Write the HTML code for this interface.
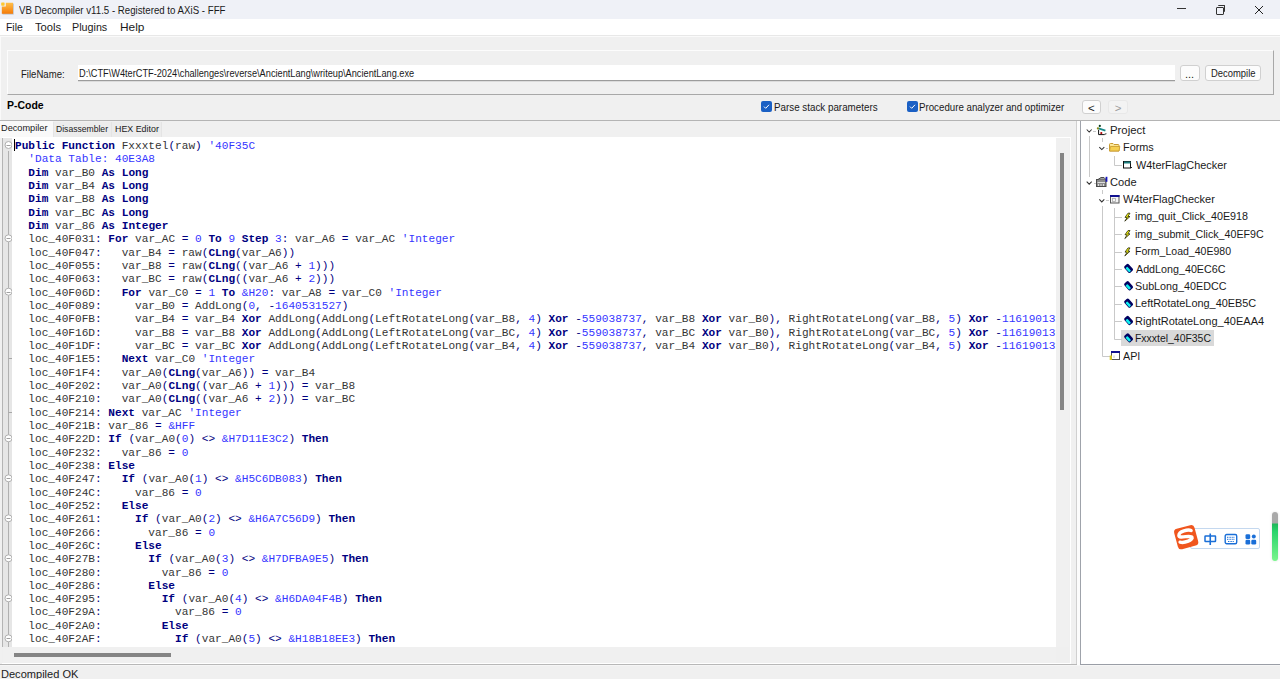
<!DOCTYPE html>
<html><head><meta charset="utf-8"><style>
html,body{margin:0;padding:0}
body{width:1280px;height:679px;overflow:hidden;background:#f0f0f0;position:relative;font-family:"Liberation Sans",sans-serif;color:#1a1a1a}
.a{position:absolute}
.t{position:absolute;white-space:nowrap;line-height:1}
i,b{font-style:normal}
#title{left:0;top:0;width:1280px;height:19px;background:#eff1f7}
#menu{left:0;top:19px;width:1280px;height:16px;background:#fff}
#grp{left:7px;top:50px;border-top:1px solid #fcfcfc;border-left:1px solid #fcfcfc;border-right:1px solid #a8a8a8;border-bottom:1px solid #a8a8a8;box-sizing:border-box;width:1267px;height:45px}
#fname{left:78px;top:65px;width:1097px;height:16px;background:#fff;border-bottom:1px solid #9c9c9c;box-sizing:border-box}
.btn{position:absolute;background:#fcfcfc;border:1px solid #d0d0d0;border-radius:3px;box-sizing:border-box}
.cb{position:absolute;width:11px;height:11px;background:#1b60c4;border-radius:2px}
#sep1{left:0;top:120px;width:1280px;height:1px;background:#b4b4b4}
#code{left:2px;top:137px;width:1069px;height:527px;background:#efefef;border-right:1px solid #fff;border-bottom:1px solid #fff;border-top:1px solid #fff;box-sizing:border-box}
#txt{left:12px;top:138px;width:1044px;height:509px;background:#fff;overflow:hidden}
pre{margin:0;font-family:"Liberation Mono",monospace;font-size:11.11px;line-height:13.333px;color:#353535}
#pre{position:absolute;left:3px;top:2px}
.k{color:#000080;font-weight:bold}
.n{color:#3535ff}
.o{color:#000080}
#tree{left:1081px;top:121px;width:199px;height:543px;background:#fff}
.tl{position:absolute;background:#c6c6c6}
</style></head><body>
<div id="title" class="a"></div>
<svg class="a" style="left:0px;top:0px" width="16" height="17" viewBox="0 0 16 17"><defs><linearGradient id="og" x1="0" y1="0" x2="0" y2="1"><stop offset="0" stop-color="#ffc04a"/><stop offset="1" stop-color="#f57a08"/></linearGradient></defs><path d="M1.8 13.8H13V2.7H5.8V6.6H1.8Z" fill="#b8bcc4" transform="translate(0.7 0.7)"/><path d="M1.8 13.8H13V2.7H5.8V6.6H1.8Z" fill="url(#og)"/><rect x="1.2" y="2.4" width="3.4" height="3.3" rx="0.6" fill="#ffc830"/></svg>
<div class="t" id="ttl" style="left:19.00px;top:4.50px;font-size:11.00px;transform:scaleX(0.8803);transform-origin:0 0;">VB Decompiler v11.5 - Registered to AXiS - FFF</div>
<div class="a" style="left:1177px;top:8px;width:9px;height:1px;background:#333"></div>
<div class="a" style="left:1216px;top:7px;width:6px;height:6px;border:1px solid #333;border-radius:1px"></div>
<div class="a" style="left:1218px;top:5px;width:6px;height:6px;border-top:1px solid #333;border-right:1px solid #333;border-radius:1px"></div>
<svg class="a" style="left:1254px;top:5px" width="10" height="10" viewBox="0 0 10 10"><path d="M1 1L9 9M9 1L1 9" stroke="#222" stroke-width="1"/></svg>
<div id="menu" class="a"></div>
<div class="a" style="left:0;top:35px;width:1280px;height:1px;background:#e8e8e8"></div><div class="a" style="left:0;top:36px;width:1280px;height:1px;background:#fafafa"></div><div class="a" style="left:0;top:36px;width:1px;height:84px;background:#fafafa"></div>
<div class="t" id="m_file" style="left:5.56px;top:22.30px;font-size:10.80px;transform:scaleX(0.9663);transform-origin:0 0;">File</div>
<div class="t" id="m_tools" style="left:35.09px;top:22.30px;font-size:10.80px;transform:scaleX(1.0367);transform-origin:0 0;">Tools</div>
<div class="t" id="m_plugins" style="left:72.37px;top:22.30px;font-size:10.80px;transform:scaleX(0.9949);transform-origin:0 0;">Plugins</div>
<div class="t" id="m_help" style="left:119.56px;top:22.30px;font-size:10.80px;transform:scaleX(1.1011);transform-origin:0 0;">Help</div>
<div id="grp" class="a"></div>
<div class="t" id="fnl" style="left:20.55px;top:69.80px;font-size:10.00px;transform:scaleX(0.9575);transform-origin:0 0;">FileName:</div>
<div id="fname" class="a"></div>
<div class="a" style="left:78px;top:81px;width:1097px;height:1px;background:#dcdcdc"></div>
<div class="t" id="path" style="left:79.19px;top:67.90px;font-size:11.00px;transform:scaleX(0.8370);transform-origin:0 0;">D:\CTF\W4terCTF-2024\challenges\reverse\AncientLang\writeup\AncientLang.exe</div>
<div class="btn" style="left:1180px;top:65px;width:20px;height:16px"></div>
<div class="t" id="dots" style="left:1185.00px;top:69.00px;font-size:11.00px;">...</div>
<div class="btn" style="left:1205px;top:65px;width:56px;height:16px"></div>
<div class="t" id="dcb" style="left:1210.64px;top:68.90px;font-size:10.00px;transform:scaleX(0.9418);transform-origin:0 0;">Decompile</div>
<div class="t" id="pcode" style="left:6.92px;top:99.90px;font-size:10.80px;transform:scaleX(0.9681);transform-origin:0 0;font-weight:bold;color:#000">P-Code</div>
<div class="cb" style="left:761px;top:101px"></div>
<svg class="a" style="left:761px;top:101px" width="11" height="11" viewBox="0 0 11 11"><path d="M3 5.6L4.7 7.3L8 3.8" stroke="#fff" stroke-width="1" fill="none"/></svg>
<div class="cb" style="left:907px;top:101px"></div>
<svg class="a" style="left:907px;top:101px" width="11" height="11" viewBox="0 0 11 11"><path d="M3 5.6L4.7 7.3L8 3.8" stroke="#fff" stroke-width="1" fill="none"/></svg>
<div class="t" id="cb1" style="left:773.98px;top:102.00px;font-size:10.50px;transform:scaleX(0.9341);transform-origin:0 0;">Parse stack parameters</div>
<div class="t" id="cb2" style="left:919.47px;top:102.00px;font-size:10.50px;transform:scaleX(0.9252);transform-origin:0 0;">Procedure analyzer and optimizer</div>
<div class="btn" style="left:1082px;top:100px;width:19px;height:14px"></div>
<div class="t" id="lt" style="left:1088.00px;top:102.50px;font-size:11.50px;">&lt;</div>
<div class="btn" style="left:1108px;top:100px;width:20px;height:14px;background:#f3f3f3;border-color:#e8e8e8"></div>
<div class="t" id="gt" style="left:1114.80px;top:102.50px;font-size:11.50px;color:#9a9a9a">&gt;</div>
<div id="sep1" class="a"></div>
<div class="a" style="left:0;top:121px;width:53px;height:17px;background:#f9f9f9"></div>
<div class="a" style="left:53px;top:122px;width:58px;height:15px;background:#ececec;border-left:1px solid #e4e4e4"></div>
<div class="a" style="left:111px;top:122px;width:49px;height:15px;background:#ececec;border-left:1px solid #e4e4e4;border-right:1px solid #e4e4e4"></div>
<div class="t" id="tab1" style="left:1.38px;top:122.90px;font-size:9.80px;transform:scaleX(0.9375);transform-origin:0 0;">Decompiler</div>
<div class="t" id="tab2" style="left:55.64px;top:124.20px;font-size:9.80px;transform:scaleX(0.8762);transform-origin:0 0;">Disassembler</div>
<div class="t" id="tab3" style="left:114.92px;top:124.20px;font-size:9.80px;transform:scaleX(0.9047);transform-origin:0 0;">HEX Editor</div>
<div id="code" class="a"></div>
<div class="a" style="left:2px;top:138px;width:1px;height:509px;background:#b4b4b4"></div>
<div class="a" style="left:3px;top:138px;width:9px;height:509px;background:#e6e6e6"></div>
<div id="txt" class="a"><pre id="pre"><b class="k">Public</b> <b class="k">Function</b> Fxxxtel<i class="o">(</i>raw<i class="o">)</i> <i class="n">&#x27;40F35C</i>
  <i class="n">&#x27;Data Table: 40E3A8</i>
  <b class="k">Dim</b> var_B0 <b class="k">As</b> <b class="k">Long</b>
  <b class="k">Dim</b> var_B4 <b class="k">As</b> <b class="k">Long</b>
  <b class="k">Dim</b> var_B8 <b class="k">As</b> <b class="k">Long</b>
  <b class="k">Dim</b> var_BC <b class="k">As</b> <b class="k">Long</b>
  <b class="k">Dim</b> var_86 <b class="k">As</b> <b class="k">Integer</b>
  loc_40F031<i class="o">:</i> <b class="k">For</b> var_AC <i class="o">=</i> <i class="n">0</i> <b class="k">To</b> <i class="n">9</i> <b class="k">Step</b> <i class="n">3</i><i class="o">:</i> var_A6 <i class="o">=</i> var_AC <i class="n">&#x27;Integer</i>
  loc_40F047<i class="o">:</i>   var_B4 <i class="o">=</i> raw<i class="o">(</i><b class="k">CLng</b><i class="o">(</i>var_A6<i class="o">)</i><i class="o">)</i>
  loc_40F055<i class="o">:</i>   var_B8 <i class="o">=</i> raw<i class="o">(</i><b class="k">CLng</b><i class="o">(</i><i class="o">(</i>var_A6 <i class="o">+</i> <i class="n">1</i><i class="o">)</i><i class="o">)</i><i class="o">)</i>
  loc_40F063<i class="o">:</i>   var_BC <i class="o">=</i> raw<i class="o">(</i><b class="k">CLng</b><i class="o">(</i><i class="o">(</i>var_A6 <i class="o">+</i> <i class="n">2</i><i class="o">)</i><i class="o">)</i><i class="o">)</i>
  loc_40F06D<i class="o">:</i>   <b class="k">For</b> var_C0 <i class="o">=</i> <i class="n">1</i> <b class="k">To</b> <i class="n">&amp;H20</i><i class="o">:</i> var_A8 <i class="o">=</i> var_C0 <i class="n">&#x27;Integer</i>
  loc_40F089<i class="o">:</i>     var_B0 <i class="o">=</i> AddLong<i class="o">(</i><i class="n">0</i><i class="o">,</i> <i class="o">-</i><i class="n">1640531527</i><i class="o">)</i>
  loc_40F0FB<i class="o">:</i>     var_B4 <i class="o">=</i> var_B4 <b class="k">Xor</b> AddLong<i class="o">(</i>AddLong<i class="o">(</i>LeftRotateLong<i class="o">(</i>var_B8<i class="o">,</i> <i class="n">4</i><i class="o">)</i> <b class="k">Xor</b> <i class="o">-</i><i class="n">559038737</i><i class="o">,</i> var_B8 <b class="k">Xor</b> var_B0<i class="o">)</i><i class="o">,</i> RightRotateLong<i class="o">(</i>var_B8<i class="o">,</i> <i class="n">5</i><i class="o">)</i> <b class="k">Xor</b> <i class="o">-</i><i class="n">1161901316</i><i class="o">)</i>
  loc_40F16D<i class="o">:</i>     var_B8 <i class="o">=</i> var_B8 <b class="k">Xor</b> AddLong<i class="o">(</i>AddLong<i class="o">(</i>LeftRotateLong<i class="o">(</i>var_BC<i class="o">,</i> <i class="n">4</i><i class="o">)</i> <b class="k">Xor</b> <i class="o">-</i><i class="n">559038737</i><i class="o">,</i> var_BC <b class="k">Xor</b> var_B0<i class="o">)</i><i class="o">,</i> RightRotateLong<i class="o">(</i>var_BC<i class="o">,</i> <i class="n">5</i><i class="o">)</i> <b class="k">Xor</b> <i class="o">-</i><i class="n">1161901316</i><i class="o">)</i>
  loc_40F1DF<i class="o">:</i>     var_BC <i class="o">=</i> var_BC <b class="k">Xor</b> AddLong<i class="o">(</i>AddLong<i class="o">(</i>LeftRotateLong<i class="o">(</i>var_B4<i class="o">,</i> <i class="n">4</i><i class="o">)</i> <b class="k">Xor</b> <i class="o">-</i><i class="n">559038737</i><i class="o">,</i> var_B4 <b class="k">Xor</b> var_B0<i class="o">)</i><i class="o">,</i> RightRotateLong<i class="o">(</i>var_B4<i class="o">,</i> <i class="n">5</i><i class="o">)</i> <b class="k">Xor</b> <i class="o">-</i><i class="n">1161901316</i><i class="o">)</i>
  loc_40F1E5<i class="o">:</i>   <b class="k">Next</b> var_C0 <i class="n">&#x27;Integer</i>
  loc_40F1F4<i class="o">:</i>   var_A0<i class="o">(</i><b class="k">CLng</b><i class="o">(</i>var_A6<i class="o">)</i><i class="o">)</i> <i class="o">=</i> var_B4
  loc_40F202<i class="o">:</i>   var_A0<i class="o">(</i><b class="k">CLng</b><i class="o">(</i><i class="o">(</i>var_A6 <i class="o">+</i> <i class="n">1</i><i class="o">)</i><i class="o">)</i><i class="o">)</i> <i class="o">=</i> var_B8
  loc_40F210<i class="o">:</i>   var_A0<i class="o">(</i><b class="k">CLng</b><i class="o">(</i><i class="o">(</i>var_A6 <i class="o">+</i> <i class="n">2</i><i class="o">)</i><i class="o">)</i><i class="o">)</i> <i class="o">=</i> var_BC
  loc_40F214<i class="o">:</i> <b class="k">Next</b> var_AC <i class="n">&#x27;Integer</i>
  loc_40F21B<i class="o">:</i> var_86 <i class="o">=</i> <i class="n">&amp;HFF</i>
  loc_40F22D<i class="o">:</i> <b class="k">If</b> <i class="o">(</i>var_A0<i class="o">(</i><i class="n">0</i><i class="o">)</i> <i class="o">&lt;&gt;</i> <i class="n">&amp;H7D11E3C2</i><i class="o">)</i> <b class="k">Then</b>
  loc_40F232<i class="o">:</i>   var_86 <i class="o">=</i> <i class="n">0</i>
  loc_40F238<i class="o">:</i> <b class="k">Else</b>
  loc_40F247<i class="o">:</i>   <b class="k">If</b> <i class="o">(</i>var_A0<i class="o">(</i><i class="n">1</i><i class="o">)</i> <i class="o">&lt;&gt;</i> <i class="n">&amp;H5C6DB083</i><i class="o">)</i> <b class="k">Then</b>
  loc_40F24C<i class="o">:</i>     var_86 <i class="o">=</i> <i class="n">0</i>
  loc_40F252<i class="o">:</i>   <b class="k">Else</b>
  loc_40F261<i class="o">:</i>     <b class="k">If</b> <i class="o">(</i>var_A0<i class="o">(</i><i class="n">2</i><i class="o">)</i> <i class="o">&lt;&gt;</i> <i class="n">&amp;H6A7C56D9</i><i class="o">)</i> <b class="k">Then</b>
  loc_40F266<i class="o">:</i>       var_86 <i class="o">=</i> <i class="n">0</i>
  loc_40F26C<i class="o">:</i>     <b class="k">Else</b>
  loc_40F27B<i class="o">:</i>       <b class="k">If</b> <i class="o">(</i>var_A0<i class="o">(</i><i class="n">3</i><i class="o">)</i> <i class="o">&lt;&gt;</i> <i class="n">&amp;H7DFBA9E5</i><i class="o">)</i> <b class="k">Then</b>
  loc_40F280<i class="o">:</i>         var_86 <i class="o">=</i> <i class="n">0</i>
  loc_40F286<i class="o">:</i>       <b class="k">Else</b>
  loc_40F295<i class="o">:</i>         <b class="k">If</b> <i class="o">(</i>var_A0<i class="o">(</i><i class="n">4</i><i class="o">)</i> <i class="o">&lt;&gt;</i> <i class="n">&amp;H6DA04F4B</i><i class="o">)</i> <b class="k">Then</b>
  loc_40F29A<i class="o">:</i>           var_86 <i class="o">=</i> <i class="n">0</i>
  loc_40F2A0<i class="o">:</i>         <b class="k">Else</b>
  loc_40F2AF<i class="o">:</i>           <b class="k">If</b> <i class="o">(</i>var_A0<i class="o">(</i><i class="n">5</i><i class="o">)</i> <i class="o">&lt;&gt;</i> <i class="n">&amp;H18B18EE3</i><i class="o">)</i> <b class="k">Then</b></pre></div>
<div class="a" style="left:14px;top:139px;width:1px;height:12px;background:#000"></div>
<svg class="a" style="left:3px;top:138px" width="9" height="509" viewBox="0 0 9 509">
<path d="M5.5 13.0 V509" stroke="#b0b0b0" stroke-width="1"/>
<path d="M5.5 220.5 H9" stroke="#a8a8a8" stroke-width="1"/>
<path d="M5.5 274.5 H9" stroke="#a8a8a8" stroke-width="1"/>
<circle cx="5.5" cy="7.0" r="3.5" fill="#fff" stroke="#b0b0b0" stroke-width="1"/><path d="M3.5 7.5 H7.5" stroke="#a0a0a0" stroke-width="1"/>
<circle cx="5.5" cy="100.3" r="3.5" fill="#fff" stroke="#b0b0b0" stroke-width="1"/><path d="M3.5 100.5 H7.5" stroke="#a0a0a0" stroke-width="1"/>
<circle cx="5.5" cy="153.7" r="3.5" fill="#fff" stroke="#b0b0b0" stroke-width="1"/><path d="M3.5 154.5 H7.5" stroke="#a0a0a0" stroke-width="1"/>
<circle cx="5.5" cy="300.3" r="3.5" fill="#fff" stroke="#b0b0b0" stroke-width="1"/><path d="M3.5 300.5 H7.5" stroke="#a0a0a0" stroke-width="1"/>
<circle cx="5.5" cy="340.3" r="3.5" fill="#fff" stroke="#b0b0b0" stroke-width="1"/><path d="M3.5 340.5 H7.5" stroke="#a0a0a0" stroke-width="1"/>
<circle cx="5.5" cy="380.3" r="3.5" fill="#fff" stroke="#b0b0b0" stroke-width="1"/><path d="M3.5 380.5 H7.5" stroke="#a0a0a0" stroke-width="1"/>
<circle cx="5.5" cy="420.3" r="3.5" fill="#fff" stroke="#b0b0b0" stroke-width="1"/><path d="M3.5 420.5 H7.5" stroke="#a0a0a0" stroke-width="1"/>
<circle cx="5.5" cy="460.3" r="3.5" fill="#fff" stroke="#b0b0b0" stroke-width="1"/><path d="M3.5 460.5 H7.5" stroke="#a0a0a0" stroke-width="1"/>
<circle cx="5.5" cy="500.3" r="3.5" fill="#fff" stroke="#b0b0b0" stroke-width="1"/><path d="M3.5 500.5 H7.5" stroke="#a0a0a0" stroke-width="1"/>
</svg>
<div class="a" style="left:1056px;top:138px;width:13px;height:509px;background:#f0f0f0"></div>
<div class="a" style="left:1060px;top:153px;width:4px;height:257px;background:#858585"></div>
<div class="a" style="left:3px;top:647px;width:1053px;height:16px;background:#f0f0f0"></div>
<div class="a" style="left:14px;top:653px;width:157px;height:4px;background:#858585"></div>
<div class="a" style="left:1076px;top:121px;width:1px;height:543px;background:#d0d0d0"></div>
<div class="a" style="left:1080px;top:121px;width:1px;height:543px;background:#9fa3ab"></div>
<div id="tree" class="a"></div>
<div class="a" style="left:1121px;top:330px;width:93px;height:16px;background:#d9d9d9"></div>
<svg class="a" style="left:1082px;top:121px" width="198" height="543" viewBox="1082 121 198 543">
<path d="M1089.5 136V177" stroke="#c9c9c9" stroke-width="1" fill="none"/>
<path d="M1102.5 138V142" stroke="#c9c9c9" stroke-width="1" fill="none"/>
<path d="M1114.5 156V165.5H1122" stroke="#c9c9c9" stroke-width="1" fill="none"/>
<path d="M1102.5 190V194" stroke="#c9c9c9" stroke-width="1" fill="none"/>
<path d="M1102.5 206V356.5H1110" stroke="#c9c9c9" stroke-width="1" fill="none"/>
<path d="M1114.5 208V339.5" stroke="#c9c9c9" stroke-width="1" fill="none"/>
<path d="M1114.5 217.5H1122" stroke="#c9c9c9" stroke-width="1" fill="none"/>
<path d="M1114.5 234.5H1122" stroke="#c9c9c9" stroke-width="1" fill="none"/>
<path d="M1114.5 252.5H1122" stroke="#c9c9c9" stroke-width="1" fill="none"/>
<path d="M1114.5 269.5H1122" stroke="#c9c9c9" stroke-width="1" fill="none"/>
<path d="M1114.5 286.5H1122" stroke="#c9c9c9" stroke-width="1" fill="none"/>
<path d="M1114.5 304.5H1122" stroke="#c9c9c9" stroke-width="1" fill="none"/>
<path d="M1114.5 321.5H1122" stroke="#c9c9c9" stroke-width="1" fill="none"/>
<path d="M1114.5 339.5H1122" stroke="#c9c9c9" stroke-width="1" fill="none"/>
<path d="M1093 131.5H1096" stroke="#c9c9c9" stroke-width="1" fill="none"/>
<path d="M1106 148.5H1108" stroke="#c9c9c9" stroke-width="1" fill="none"/>
<path d="M1094 183.5H1096" stroke="#c9c9c9" stroke-width="1" fill="none"/>
<path d="M1106 200.5H1109" stroke="#c9c9c9" stroke-width="1" fill="none"/>
<path d="M1086.7 129.5L1089.2 132.0L1091.7 129.5" stroke="#333" stroke-width="1.05" fill="none"/>
<path d="M1099.3 147.1L1101.8 149.6L1104.3 147.1" stroke="#333" stroke-width="1.05" fill="none"/>
<path d="M1086.7 181.7L1089.2 184.2L1091.7 181.7" stroke="#333" stroke-width="1.05" fill="none"/>
<path d="M1099.3 199.4L1101.8 201.9L1104.3 199.4" stroke="#333" stroke-width="1.05" fill="none"/>
<rect x="1098.5" y="130" width="6.5" height="4.5" fill="#fff"/>
<path d="M1098.6 129.8V134.6H1104" stroke="#111" stroke-width="1" fill="none"/>
<path d="M1104 134.8L1106.4 133.4" stroke="#555" stroke-width="1.2"/>
<path d="M1098.6 128.4L1105.4 130.6" stroke="#1a8a8a" stroke-width="1.9"/>
<circle cx="1097.9" cy="128.4" r="1.1" fill="#8a8a18"/>
<circle cx="1099.8" cy="125.9" r="1.1" fill="#063a14"/>
<circle cx="1101.3" cy="133.1" r="1.1" fill="#b00808"/>
<defs><linearGradient id="fg" x1="0" y1="0" x2="0" y2="1"><stop offset="0" stop-color="#fff2b0"/><stop offset="1" stop-color="#f0c040"/></linearGradient></defs>
<path d="M1109.5 151V144.5Q1109.5 143.5 1110.5 143.5H1113L1114 144.5H1118Q1119 144.5 1119 145.5V151Z" fill="url(#fg)" stroke="#c89a30" stroke-width="1"/>
<path d="M1109.5 151L1110.5 146.5H1119.8L1119 151Z" fill="#f5cf50" stroke="#c89a30" stroke-width="0.8"/>
<rect x="1123.5" y="161.5" width="7" height="6.5" fill="#fff" stroke="#111" stroke-width="1"/>
<rect x="1124" y="161.5" width="6.5" height="2" fill="#1e8080"/>
<path d="M1130.5 166.5L1132 168" stroke="#222" stroke-width="1"/>
<rect x="1096.5" y="179.5" width="9.5" height="7" fill="#8c8c8c" stroke="#4a4a4a" stroke-width="1"/>
<path d="M1097.5 182.5H1105M1098.5 184V186M1101 184V186M1103.5 184V186" stroke="#e8e8e8" stroke-width="0.9"/>
<path d="M1098 179.5L1101 177.5H1104L1106 179.5" fill="#a0a0a0" stroke="#4a4a4a" stroke-width="1"/>
<rect x="1105.6" y="176.8" width="1.8" height="5" fill="#1515c0"/>
<rect x="1110.5" y="195.5" width="8.5" height="7.5" fill="#f4f4f4" stroke="#555" stroke-width="1"/>
<rect x="1110" y="195" width="9.5" height="2" fill="#101090"/>
<rect x="1112.5" y="198.5" width="3" height="3" fill="none" stroke="#aaa" stroke-width="0.8"/>
<path d="M1128 213.20L1125 217.40L1127.2 217.40L1124.8 221.20L1130 216.50L1127.8 216.50L1130 213.20Z" fill="#ffff10" stroke="#1a1a00" stroke-width="0.75"/>
<path d="M1128 230.56L1125 234.76L1127.2 234.76L1124.8 238.56L1130 233.86L1127.8 233.86L1130 230.56Z" fill="#ffff10" stroke="#1a1a00" stroke-width="0.75"/>
<path d="M1128 247.92L1125 252.12L1127.2 252.12L1124.8 255.92L1130 251.22L1127.8 251.22L1130 247.92Z" fill="#ffff10" stroke="#1a1a00" stroke-width="0.75"/>
<g transform="translate(1128.6 268.40) rotate(-42)"><rect x="-2.9" y="-4.4" width="5.8" height="8.8" rx="1.6" fill="#000060"/><rect x="-2.3" y="-2.2" width="2.6" height="5.6" rx="0.8" fill="#10f0f0"/></g>
<g transform="translate(1128.6 285.76) rotate(-42)"><rect x="-2.9" y="-4.4" width="5.8" height="8.8" rx="1.6" fill="#000060"/><rect x="-2.3" y="-2.2" width="2.6" height="5.6" rx="0.8" fill="#10f0f0"/></g>
<g transform="translate(1128.6 303.12) rotate(-42)"><rect x="-2.9" y="-4.4" width="5.8" height="8.8" rx="1.6" fill="#000060"/><rect x="-2.3" y="-2.2" width="2.6" height="5.6" rx="0.8" fill="#10f0f0"/></g>
<g transform="translate(1128.6 320.48) rotate(-42)"><rect x="-2.9" y="-4.4" width="5.8" height="8.8" rx="1.6" fill="#000060"/><rect x="-2.3" y="-2.2" width="2.6" height="5.6" rx="0.8" fill="#10f0f0"/></g>
<g transform="translate(1128.6 337.84) rotate(-42)"><rect x="-2.9" y="-4.4" width="5.8" height="8.8" rx="1.6" fill="#000060"/><rect x="-2.3" y="-2.2" width="2.6" height="5.6" rx="0.8" fill="#10f0f0"/></g>
<rect x="1111.5" y="352.5" width="8" height="7" fill="#fff" stroke="#555" stroke-width="1"/>
<rect x="1111" y="351" width="9" height="2" fill="#101090"/>
<path d="M1110.8 355.5V360" stroke="#d8c820" stroke-width="2.2"/>
<path d="M1114 355.5V358" stroke="#bbb" stroke-width="0.8"/>
</svg>
<div class="t" id="tr_project" style="left:1110.10px;top:125.00px;font-size:11.80px;transform:scaleX(0.9619);transform-origin:0 0;">Project</div>
<div class="t" id="tr_forms" style="left:1123.10px;top:142.44px;font-size:11.80px;transform:scaleX(0.9208);transform-origin:0 0;">Forms</div>
<div class="t" id="tr_form1" style="left:1136.05px;top:159.88px;font-size:11.80px;transform:scaleX(0.9252);transform-origin:0 0;">W4terFlagChecker</div>
<div class="t" id="tr_code" style="left:1110.10px;top:177.32px;font-size:11.80px;transform:scaleX(0.9421);transform-origin:0 0;">Code</div>
<div class="t" id="tr_form2" style="left:1123.04px;top:193.76px;font-size:11.80px;transform:scaleX(0.9338);transform-origin:0 0;">W4terFlagChecker</div>
<div class="t" id="tr_e1" style="left:1135.16px;top:211.20px;font-size:11.80px;transform:scaleX(0.9118);transform-origin:0 0;">img_quit_Click_40E918</div>
<div class="t" id="tr_e2" style="left:1135.16px;top:228.64px;font-size:11.80px;transform:scaleX(0.9045);transform-origin:0 0;">img_submit_Click_40EF9C</div>
<div class="t" id="tr_e3" style="left:1135.16px;top:246.08px;font-size:11.80px;transform:scaleX(0.8929);transform-origin:0 0;">Form_Load_40E980</div>
<div class="t" id="tr_f1" style="left:1136.02px;top:263.52px;font-size:11.80px;transform:scaleX(0.9092);transform-origin:0 0;">AddLong_40EC6C</div>
<div class="t" id="tr_f2" style="left:1135.12px;top:280.96px;font-size:11.80px;transform:scaleX(0.9110);transform-origin:0 0;">SubLong_40EDCC</div>
<div class="t" id="tr_f3" style="left:1135.12px;top:298.40px;font-size:11.80px;transform:scaleX(0.9243);transform-origin:0 0;">LeftRotateLong_40EB5C</div>
<div class="t" id="tr_f4" style="left:1135.12px;top:315.84px;font-size:11.80px;transform:scaleX(0.9329);transform-origin:0 0;">RightRotateLong_40EAA4</div>
<div class="t" id="tr_f5" style="left:1135.12px;top:333.28px;font-size:11.80px;transform:scaleX(0.8844);transform-origin:0 0;">Fxxxtel_40F35C</div>
<div class="t" id="tr_api" style="left:1123.03px;top:350.72px;font-size:11.80px;transform:scaleX(0.9114);transform-origin:0 0;">API</div>
<div class="a" style="left:1190px;top:528px;width:70px;height:21px;background:#fff;border:1px solid #c4d8ef;border-radius:2px;box-sizing:border-box"></div>
<svg class="a" style="left:1170px;top:520px" width="34" height="34" viewBox="0 0 34 34"><g transform="translate(16.2 17.2) rotate(-15)"><rect x="-10.5" y="-10.5" width="21" height="21" rx="3.5" fill="#f0561e"/><path d="M6.5 -5.2C4 -7.2 -5.5 -7.8 -6.6 -3.6C-7.6 0.3 5.2 -1.6 5.6 1.6C6 4.5 -3 5.5 -7.2 3.2" fill="none" stroke="#fff" stroke-width="3.4" stroke-linecap="round"/></g></svg>
<svg class="a" style="left:1204px;top:533px" width="13" height="13" viewBox="0 0 13 13"><rect x="1" y="3" width="10.5" height="5.5" fill="none" stroke="#1a6fd8" stroke-width="1.5" rx="0.5"/><path d="M6.25 0.5V12" stroke="#1a6fd8" stroke-width="1.6"/></svg>
<svg class="a" style="left:1224px;top:533px" width="14" height="12" viewBox="0 0 14 12"><rect x="1.2" y="1.5" width="11.5" height="9.3" rx="1.5" fill="none" stroke="#1a6fd8" stroke-width="1.4"/><path d="M3 4.3H11M3 6.3H11M4 8.5H10" stroke="#1a6fd8" stroke-width="1" stroke-dasharray="1 0.6"/></svg>
<svg class="a" style="left:1245px;top:534px" width="12" height="11" viewBox="0 0 12 11"><rect x="0.5" y="0.3" width="4.7" height="4.7" rx="1.3" fill="#1a6fd8"/><circle cx="8.8" cy="2.6" r="2" fill="#1a6fd8"/><rect x="0.5" y="5.8" width="4.7" height="4.7" rx="1.3" fill="#1a6fd8"/><rect x="6.3" y="5.8" width="4.9" height="4.7" rx="1.3" fill="#1a6fd8"/></svg>
<div class="a" style="left:1272px;top:512px;width:6px;height:49px;border-radius:3px;background:linear-gradient(#a8a8a8 0,#a8a8a8 11px,#1fb85a 12px,#2ad46c 40%,#7af58c 100%);box-shadow:0 0 3px rgba(0,0,0,0.12)"></div>
<div class="a" style="left:0;top:664px;width:1077px;height:1px;background:#b8b8b8"></div><div class="a" style="left:1080px;top:664px;width:200px;height:1px;background:#9a9ea6"></div><div class="a" style="left:1077px;top:121px;width:3px;height:544px;background:#fcfcfc"></div><div class="a" style="left:0;top:665px;width:1280px;height:1px;background:#f6f6f6"></div>
<div class="t" id="status" style="left:0.99px;top:669.80px;font-size:10.00px;transform:scaleX(1.1046);transform-origin:0 0;">Decompiled OK</div>
</body></html>
